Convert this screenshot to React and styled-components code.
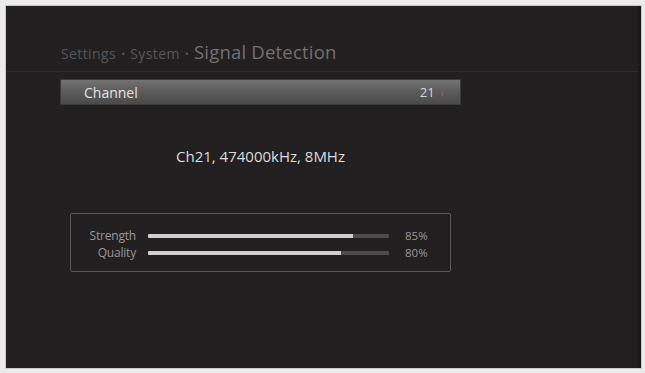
import React from "react";
import styled, { createGlobalStyle } from "styled-components";

const GlobalStyle = createGlobalStyle`
  html, body {
    margin: 0;
    padding: 0;
    background: #ebebeb;
  }
  body {
    font-family: "Open Sans", "DejaVu Sans", sans-serif;
  }
`;

const Frame = styled.div`
  width: 645px;
  height: 373px;
  box-sizing: border-box;
  padding: 6px 4px 4px 6px;
  background: #ebebeb;
`;

const Screen = styled.div`
  width: 635px;
  height: 362px;
  background: #221f20;
  box-shadow: 0 0 0 1px #c9c9c9;
  border-right: 3px solid #1a1819;
  box-sizing: border-box;
  display: flex;
  flex-direction: column;
`;

const Header = styled.div`
  height: 66px;
  box-sizing: border-box;
  border-bottom: 1px solid #2d2a2b;
  display: flex;
  align-items: flex-end;
  padding: 0 0 8px 55px;
`;

const Crumb = styled.span`
  font-size: 14px;
  color: #595657;
  letter-spacing: 0.4px;
  line-height: 19px;
`;

const Dot = styled.span`
  font-size: 11px;
  color: #595657;
  margin: 0 5px;
  line-height: 19px;
`;

const Title = styled.span`
  font-size: 18.5px;
  color: #737071;
  line-height: 22px;
  letter-spacing: 0.2px;
`;

const Body = styled.div`
  width: 401px;
  margin-left: 54px;
  padding-top: 7px;
  display: flex;
  flex-direction: column;
`;

const MenuBar = styled.div`
  height: 26px;
  box-sizing: border-box;
  background: linear-gradient(#737373, #5a5a5a 50%, #4a4a4a);
  border: 1px solid #3a3a3a;
  display: flex;
  align-items: center;
  padding: 0 16px 0 23px;
  color: #e4e4e4;
  font-size: 14px;
`;

const Label = styled.span`
  flex: 1;
`;

const Value = styled.span`
  color: #d8d8d8;
  font-size: 13px;
`;

const Chevron = styled.span`
  color: #7a7a7a;
  font-size: 11px;
  margin-left: 6px;
`;

const Info = styled.div`
  text-align: center;
  margin-top: 42px;
  color: #dcdcdc;
  font-size: 15px;
  line-height: 18px;
`;

const SignalBox = styled.div`
  margin: 48px 0 0 10px;
  width: 381px;
  height: 59px;
  box-sizing: border-box;
  border: 1px solid #5a5758;
  border-radius: 2px;
  padding: 13px 0 0 0;
  display: grid;
  grid-template-columns: 65px 241px 40px;
  column-gap: 12px;
  grid-auto-rows: 17px;
  align-items: center;
`;

const MeterName = styled.span`
  text-align: right;
  font-size: 12px;
  color: #9a9798;
  letter-spacing: -0.2px;
`;

const Track = styled.div`
  height: 4px;
  background: #4e4b4c;
  border-radius: 1px;
  overflow: hidden;
`;

const Fill = styled.div`
  height: 100%;
  background: #cfcfcf;
`;

const Percent = styled.span`
  font-size: 11.5px;
  color: #9a9798;
  padding-left: 4px;
`;

const meters = [
  { name: "Strength", value: 85 },
  { name: "Quality", value: 80 },
];

export default function App() {
  return (
    <>
      <GlobalStyle />
      <Frame>
        <Screen>
          <Header>
            <Crumb>Settings</Crumb>
            <Dot>•</Dot>
            <Crumb>System</Crumb>
            <Dot>•</Dot>
            <Title>Signal Detection</Title>
          </Header>
          <Body>
            <MenuBar>
              <Label>Channel</Label>
              <Value>21</Value>
              <Chevron>›</Chevron>
            </MenuBar>
            <Info>Ch21, 474000kHz, 8MHz</Info>
            <SignalBox>
              {meters.map((m) => (
                <React.Fragment key={m.name}>
                  <MeterName>{m.name}</MeterName>
                  <Track>
                    <Fill style={{ width: `${m.value}%` }} />
                  </Track>
                  <Percent>{m.value}%</Percent>
                </React.Fragment>
              ))}
            </SignalBox>
          </Body>
        </Screen>
      </Frame>
    </>
  );
}
